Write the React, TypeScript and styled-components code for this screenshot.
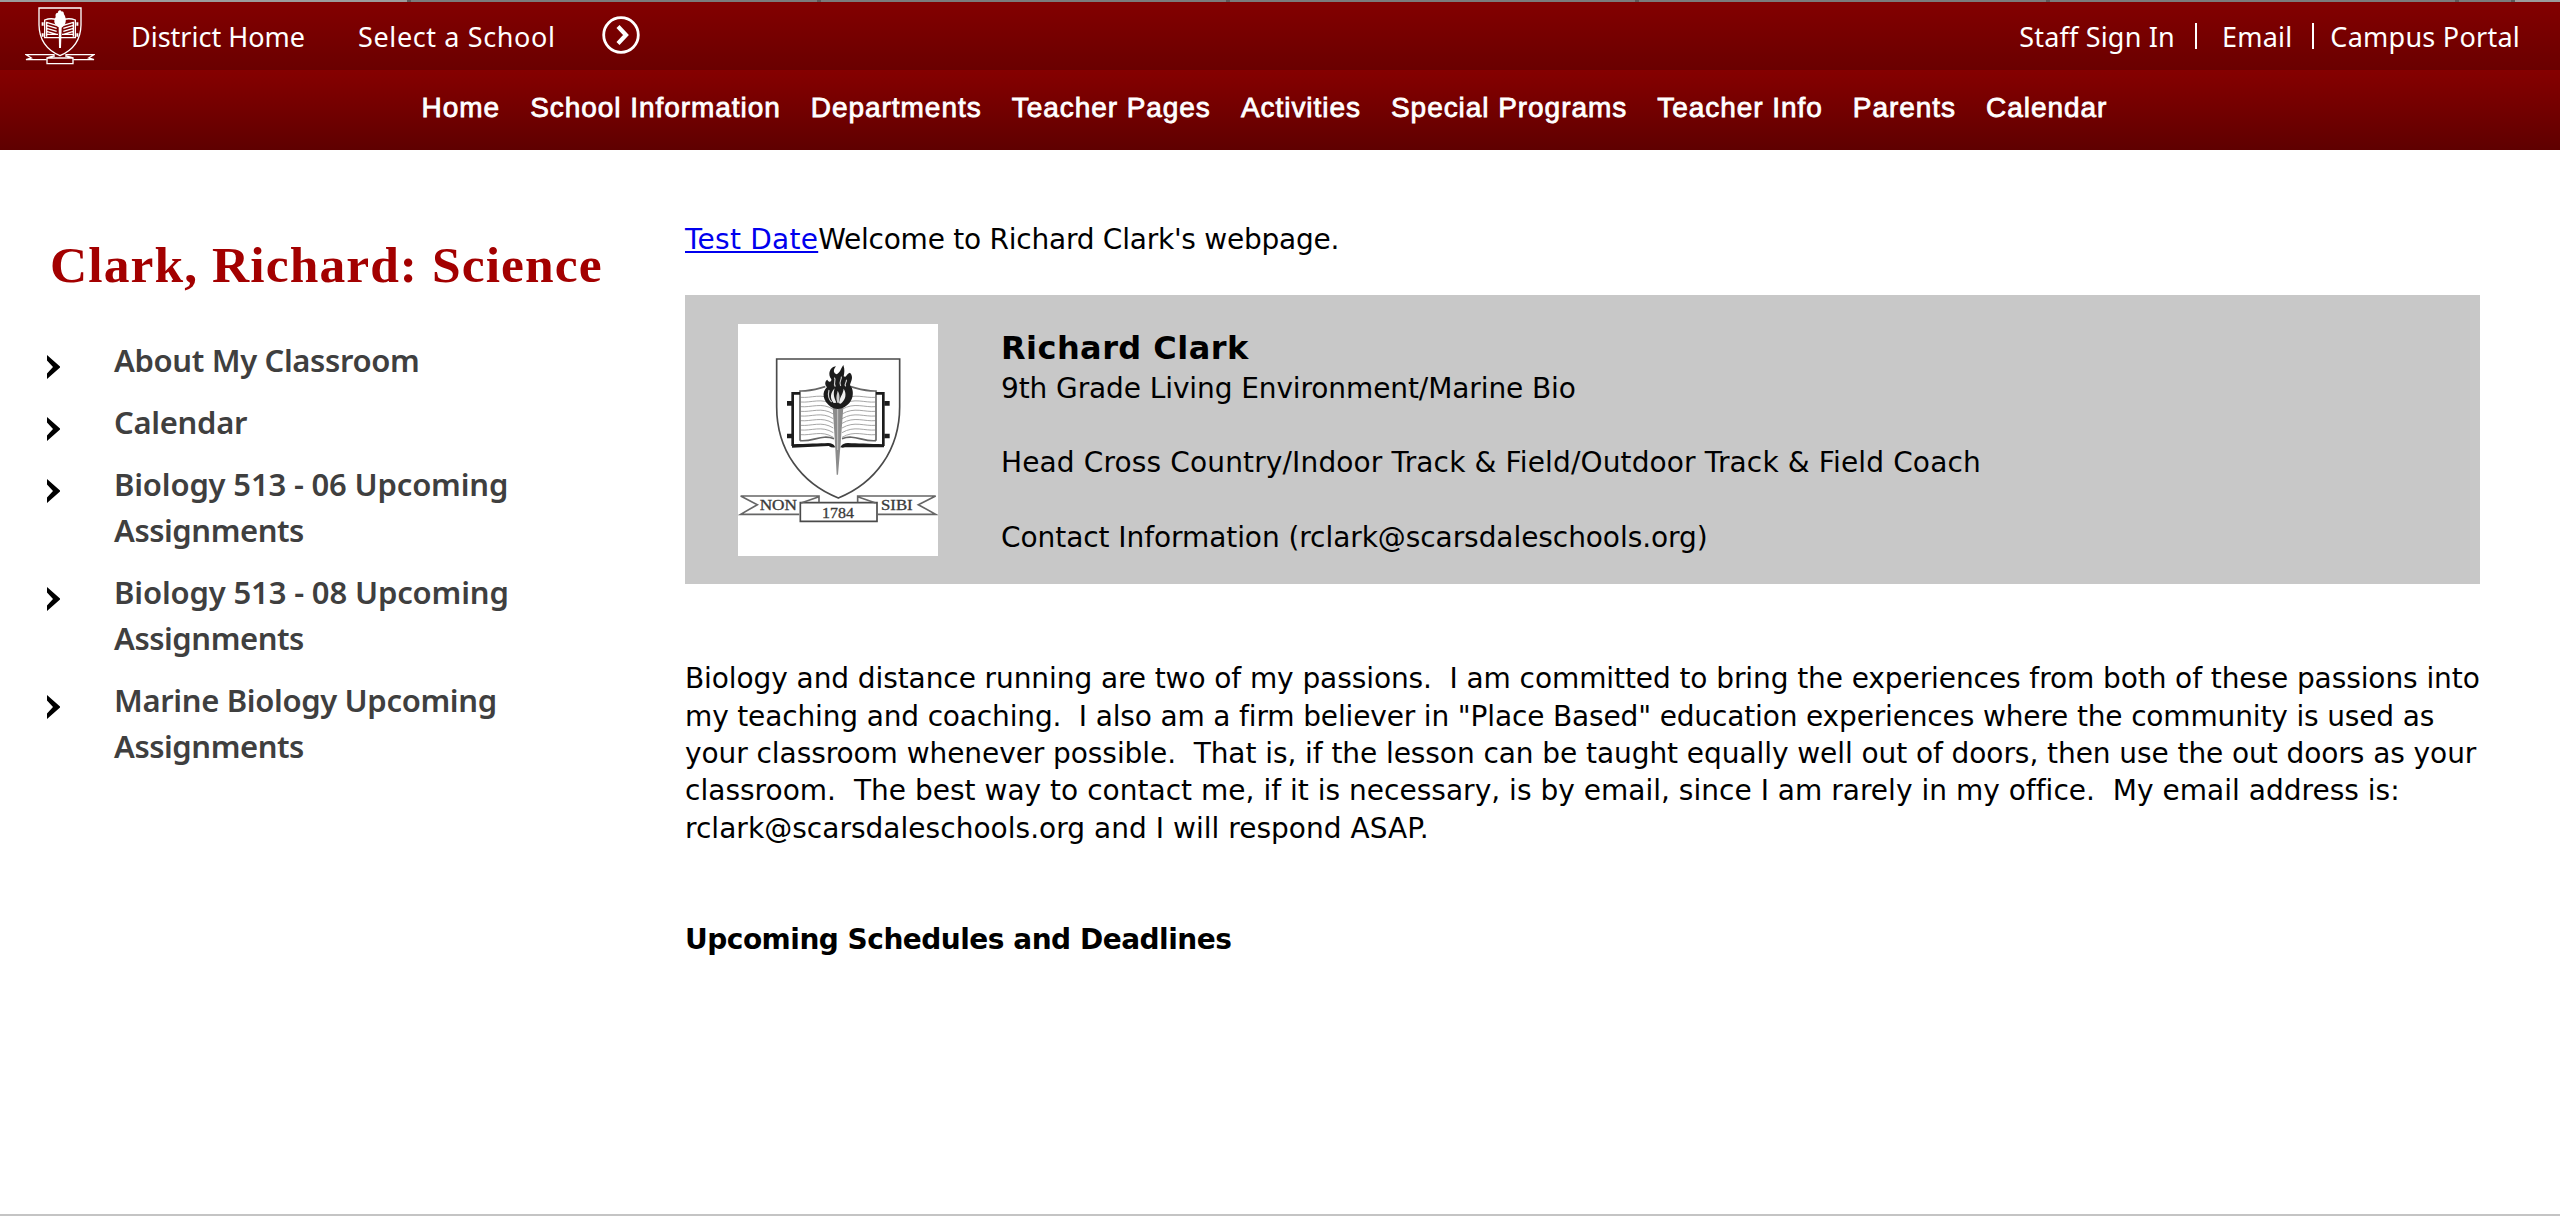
import React from "react";
import styled, { createGlobalStyle } from "styled-components";

const GlobalStyle = createGlobalStyle`
  *, *::before, *::after { box-sizing: border-box; }
  body { margin: 0; background: #fff; font-variant-ligatures: none; }
  a { color: inherit; text-decoration: none; }
`;

const sans = `"Noto Sans", "Open Sans", sans-serif`;
const arial = `"Liberation Sans", Arial, sans-serif`;
const verdana = `Verdana, "DejaVu Sans", sans-serif`;
const serif = `"Liberation Serif", "Times New Roman", serif`;

const Page = styled.div`
  width: 2560px;
  height: 1216px;
  display: flex;
  flex-direction: column;
  border-bottom: 2px solid #c4c4c4;
  overflow: hidden;
`;

const TabStrip = styled.div`
  height: 2px;
  flex: none;
  display: flex;
  background: #5c5c5c;
  gap: 4px;
`;

const TabEdge = styled.div<{ $w: number; $light?: boolean }>`
  width: ${(p) => p.$w}px;
  flex: none;
  background: ${(p) => (p.$light ? "#9c9c9c" : "#7b7b7b")};
`;

const TopBar = styled.header`
  height: 68px;
  flex: none;
  display: flex;
  align-items: center;
  padding: 0 40px 0 25px;
  background: linear-gradient(#830000, #6a0000);
`;

const UtilityLink = styled.a<{ $ml?: number; $ls?: number }>`
  margin-left: ${(p) => p.$ml ?? 0}px;
  padding-top: 1px;
  color: #fff;
  font: 400 27px/67px ${sans};
  letter-spacing: ${(p) => p.$ls ?? 0}px;
  white-space: nowrap;
`;

const CircleIcon = styled.svg`
  width: 40px;
  height: 40px;
  margin: 0 0 2px 45px;
`;

const UtilityRight = styled.div`
  margin-left: auto;
  display: flex;
  align-items: center;
`;

const Divider = styled.span<{ $l: number; $r: number }>`
  width: 2px;
  height: 26px;
  background: #fff;
  margin: 0 ${(p) => p.$r}px 0 ${(p) => p.$l}px;
`;

const NavBar = styled.nav`
  height: 80px;
  flex: none;
  display: flex;
  gap: 30.1px;
  padding: 0 0 5px 421.6px;
  background: linear-gradient(#860000, #5f0000);
`;

const NavLink = styled.a`
  color: #fff;
  font: 400 28px/75px ${arial};
  letter-spacing: 0.95px;
  -webkit-text-stroke: 0.8px #fff;
  white-space: nowrap;
`;

const Body = styled.div`
  display: flex;
  flex: 1;
`;

const Sidebar = styled.aside`
  width: 685px;
  flex: none;
  padding: 85px 0 0 47px;
`;

const Title = styled.h1`
  margin: 0 0 42px 3px;
  color: #a30000;
  font: 700 51.5px/60px ${serif};
  letter-spacing: 1.08px;
  white-space: nowrap;
`;

const Menu = styled.ul`
  list-style: none;
  margin: 0;
  padding: 0;
  display: flex;
  flex-direction: column;
  gap: 16px;
`;

const MenuItem = styled.li`
  display: flex;
  align-items: flex-start;
  gap: 54px;
`;

const Chevron = styled.svg`
  width: 13px;
  height: 24px;
  margin-top: 18px;
  flex: none;
`;

const MenuLink = styled.a`
  display: flex;
  flex-direction: column;
  color: #3f3f3f;
  font: 600 31px/46px ${sans};
`;

const Line = styled.span<{ $ls?: number }>`
  display: block;
  white-space: pre;
  letter-spacing: ${(p) => p.$ls ?? 0}px;
`;

const Main = styled.main`
  width: 1795px;
  padding-top: 71px;
  color: #000;
  font: 400 28px/37.33px ${verdana};
`;

const Intro = styled.p`
  margin: 0 0 37px;
  white-space: pre;
  letter-spacing: -0.24px;
`;

const DateLink = styled.a`
  color: #0000ee;
  letter-spacing: 0.25px;
  text-decoration: underline;
  text-decoration-thickness: 2px;
  text-underline-offset: 2px;
`;

const Card = styled.section`
  height: 289px;
  display: flex;
  align-items: flex-start;
  background: #c8c8c8;
  padding: 29px 0 0 53px;
  gap: 63px;
`;

const CrestFrame = styled.div`
  width: 200px;
  height: 232px;
  background: #fff;
  flex: none;
`;

const CardText = styled.div`
  padding-top: 3px;
`;

const Name = styled.h2`
  margin: 0;
  font: 700 32px/42px ${verdana};
  letter-spacing: 0.44px;
`;

const CardLine = styled(Line)`
  margin-bottom: 37.33px;
`;

const Grade = styled(Line)`
  margin: 1px 0 36.33px;
`;

const Bio = styled.p`
  margin: 76px 0 74px;
`;

const Subhead = styled.h3`
  margin: 0;
  font: 700 28px/37.33px ${verdana};
  letter-spacing: -0.5px;
`;

const HeaderCrest = () => (
  <svg width="70" height="60" viewBox="45 21 210 180" fill="none" stroke="#fff" strokeWidth="4">
    <path d="M87 27H213V78C212 128 188 154 150 170C112 154 88 128 87 78Z" />
    <path d="M104 63Q127 54 150 66Q173 54 196 63V116H104Z" />
    <path d="M98 70V80M98 103V113M202 70V80M202 103V113" strokeWidth="6" />
    <path
      d="M110 70l30 9M110 79l30 9M110 88l30 9M110 97l30 9M110 106h34M190 70l-30 9M190 79l-30 9M190 88l-30 9M190 97l-30 9M190 106h-34M110 113V68M190 113V68"
      strokeWidth="4"
    />
    <path
      d="M146 85C130 76 131 64 137 54C135 47 139 39 144 42C143 32 153 31 155 38C163 36 160 45 164 49C170 62 169 78 155 86L153 147H147Z"
      fill="#fff"
      stroke="none"
    />
    <path d="M110 182H48L64 177L48 167H132V174M190 182H252L236 177L252 167H168V174" />
    <path d="M111 177H189V194H111ZM111 177L131 171M189 177L169 171" />
  </svg>
);

const pageLines = [262, 276, 290, 304, 318, 332, 346, 360, 374];

const Crest = () => (
  <svg width="200" height="232" viewBox="54 42 600 696" fill="none" stroke="#4a4a4a" strokeWidth="5">
    <path d="M170 147H539V290C539 420 465 520 355 564C243 520 170 420 170 290Z" />
    <g stroke="#a6a6a6" strokeWidth="3">
      {pageLines.map((y) => (
        <path
          key={y}
          d={`M242 ${y}C275 ${y + 3} 305 ${y - 14} 340 ${y + 8}M466 ${y}C433 ${y + 3} 403 ${y - 14} 366 ${y + 8}`}
        />
      ))}
    </g>
    <path d="M240 392V243C270 244 292 236 316 230M468 392V243C438 244 416 236 392 230" stroke="#666" />
    <path d="M240 392C280 396 305 372 342 386M468 392C428 396 403 372 366 386" stroke="#666" />
    <path d="M218 408V250H240M490 408V250H468" stroke="#1c1c1c" strokeWidth="8" />
    <path
      d="M216 403C262 401 300 400 324 399Q340 399 345 410H362Q368 399 384 399C410 400 446 401 492 403V412H375Q368 414 362 412H345Q335 414 326 408L216 413Z"
      fill="#1c1c1c"
      stroke="none"
    />
    <path d="M201 273h16v14h-16zM201 371h16v14h-16zM493 273h16v14h-16zM493 371h16v14h-16z" fill="#1c1c1c" stroke="none" />
    <path d="M338 290H370L362 400L354 494H350L345 400Z" fill="#8c8c8c" stroke="none" />
    <path d="M353 294V420" stroke="#c6c6c6" strokeWidth="3" />
    <path
      d="M333 291C308 272 304 247 321 231C313 224 315 212 322 209C326 218 335 217 334 208C322 193 329 171 348 169C338 181 341 190 350 193C361 188 363 174 370 165C375 178 373 189 371 199C380 204 378 192 390 188C402 201 393 213 390 225C403 240 404 273 374 291C360 299 345 298 333 291Z"
      fill="#1c1c1c"
      stroke="none"
    />
    <path
      d="M341 279C327 264 333 247 344 235C338 255 344 266 349 278ZM362 281C377 270 381 252 371 236C369 253 358 263 357 280Z"
      fill="#eee"
      stroke="none"
    />
    <path d="M352 278C346 260 352 250 353 242C362 256 358 270 356 280Z" fill="#ccc" stroke="none" />
    <path
      d="M346 230C338 219 350 211 343 203M362 228C355 214 366 210 364 200M377 229C371 221 382 216 379 209M327 240C324 253 325 268 335 276"
      stroke="#d0d0d0"
      strokeWidth="3.5"
    />
    <path d="M241 578H471V634H241Z" />
    <path d="M238 613H62L112 584L62 558H297V577M243 579L297 560M471 613H647L595 584L647 558H413V577M467 579L413 560" stroke="#666" />
    <g fill="#3a3a3a" stroke="#3a3a3a" strokeWidth="1" fontFamily="Liberation Serif, serif" fontWeight="400">
      <text x="119" y="600" fontSize="45" textLength="112" lengthAdjust="spacingAndGlyphs">NON</text>
      <text x="483" y="600" fontSize="45" textLength="95" lengthAdjust="spacingAndGlyphs">SIBI</text>
      <text x="306" y="624" fontSize="46" textLength="96" lengthAdjust="spacingAndGlyphs">1784</text>
    </g>
  </svg>
);

const navItems = [
  "Home",
  "School Information",
  "Departments",
  "Teacher Pages",
  "Activities",
  "Special Programs",
  "Teacher Info",
  "Parents",
  "Calendar",
];

const menuItems = [
  [{ text: "About My Classroom", ls: -0.35 }],
  [{ text: "Calendar", ls: -0.3 }],
  [{ text: "Biology 513 - 06 Upcoming", ls: -0.17 }, { text: "Assignments", ls: -0.45 }],
  [{ text: "Biology 513 - 08 Upcoming", ls: -0.15 }, { text: "Assignments", ls: -0.45 }],
  [{ text: "Marine Biology Upcoming", ls: -0.35 }, { text: "Assignments", ls: -0.45 }],
];

const bioLines = [
  { text: "Biology and distance running are two of my passions.  I am committed to bring the experiences from both of these passions into", ls: -0.085 },
  { text: 'my teaching and coaching.  I also am a firm believer in "Place Based" education experiences where the community is used as', ls: -0.15 },
  { text: "your classroom whenever possible.  That is, if the lesson can be taught equally well out of doors, then use the out doors as your", ls: -0.07 },
  { text: "classroom.  The best way to contact me, if it is necessary, is by email, since I am rarely in my office.  My email address is:", ls: 0.02 },
  { text: "rclark@scarsdaleschools.org and I will respond ASAP.", ls: 0.03 },
];

export default function App() {
  return (
    <Page>
      <GlobalStyle />
      <TabStrip>
        <TabEdge $w={407} $light />
        <TabEdge $w={406} />
        <TabEdge $w={405} />
        <TabEdge $w={405} />
        <TabEdge $w={407} />
        <TabEdge $w={405} />
        <TabEdge $w={52} />
        <TabEdge $w={46} $light />
      </TabStrip>
      <TopBar>
        <HeaderCrest />
        <UtilityLink href="#" $ml={36}>District Home</UtilityLink>
        <UtilityLink href="#" $ml={53} $ls={0.62}>Select a School</UtilityLink>
        <CircleIcon viewBox="0 0 40 40" fill="none" stroke="#fff">
          <circle cx="20" cy="20" r="17.3" strokeWidth="2.8" />
          <path d="M17 11.5L25 20L17 28.5" strokeWidth="4.2" />
        </CircleIcon>
        <UtilityRight>
          <UtilityLink href="#" $ls={0.2}>Staff Sign In</UtilityLink>
          <Divider $l={20} $r={25} />
          <UtilityLink href="#" $ls={0.2}>Email</UtilityLink>
          <Divider $l={20} $r={16} />
          <UtilityLink href="#" $ls={0.25}>Campus Portal</UtilityLink>
        </UtilityRight>
      </TopBar>
      <NavBar>
        {navItems.map((n) => (
          <NavLink href="#" key={n}>{n}</NavLink>
        ))}
      </NavBar>
      <Body>
        <Sidebar>
          <Title>Clark, Richard: Science</Title>
          <Menu>
            {menuItems.map((lines) => (
              <MenuItem key={lines[0].text}>
                <Chevron viewBox="0 0 13 24">
                  <path d="M0 0L13 11.5V12.5L0 24V18.5L6 12L0 5.5Z" fill="#000" />
                </Chevron>
                <MenuLink href="#">
                  {lines.map((l) => (
                    <Line key={l.text} $ls={l.ls}>{l.text}</Line>
                  ))}
                </MenuLink>
              </MenuItem>
            ))}
          </Menu>
        </Sidebar>
        <Main>
          <Intro>
            <DateLink href="#">Test Date</DateLink>Welcome to Richard Clark's webpage.
          </Intro>
          <Card>
            <CrestFrame>
              <Crest />
            </CrestFrame>
            <CardText>
              <Name>Richard Clark</Name>
              <Grade $ls={-0.1}>9th Grade Living Environment/Marine Bio</Grade>
              <CardLine $ls={0.14}>Head Cross Country/Indoor Track &amp; Field/Outdoor Track &amp; Field Coach</CardLine>
              <Line $ls={-0.07}>Contact Information (rclark@scarsdaleschools.org)</Line>
            </CardText>
          </Card>
          <Bio>
            {bioLines.map((l) => (
              <Line key={l.text} $ls={l.ls}>{l.text}</Line>
            ))}
          </Bio>
          <Subhead>Upcoming Schedules and Deadlines</Subhead>
        </Main>
      </Body>
    </Page>
  );
}
